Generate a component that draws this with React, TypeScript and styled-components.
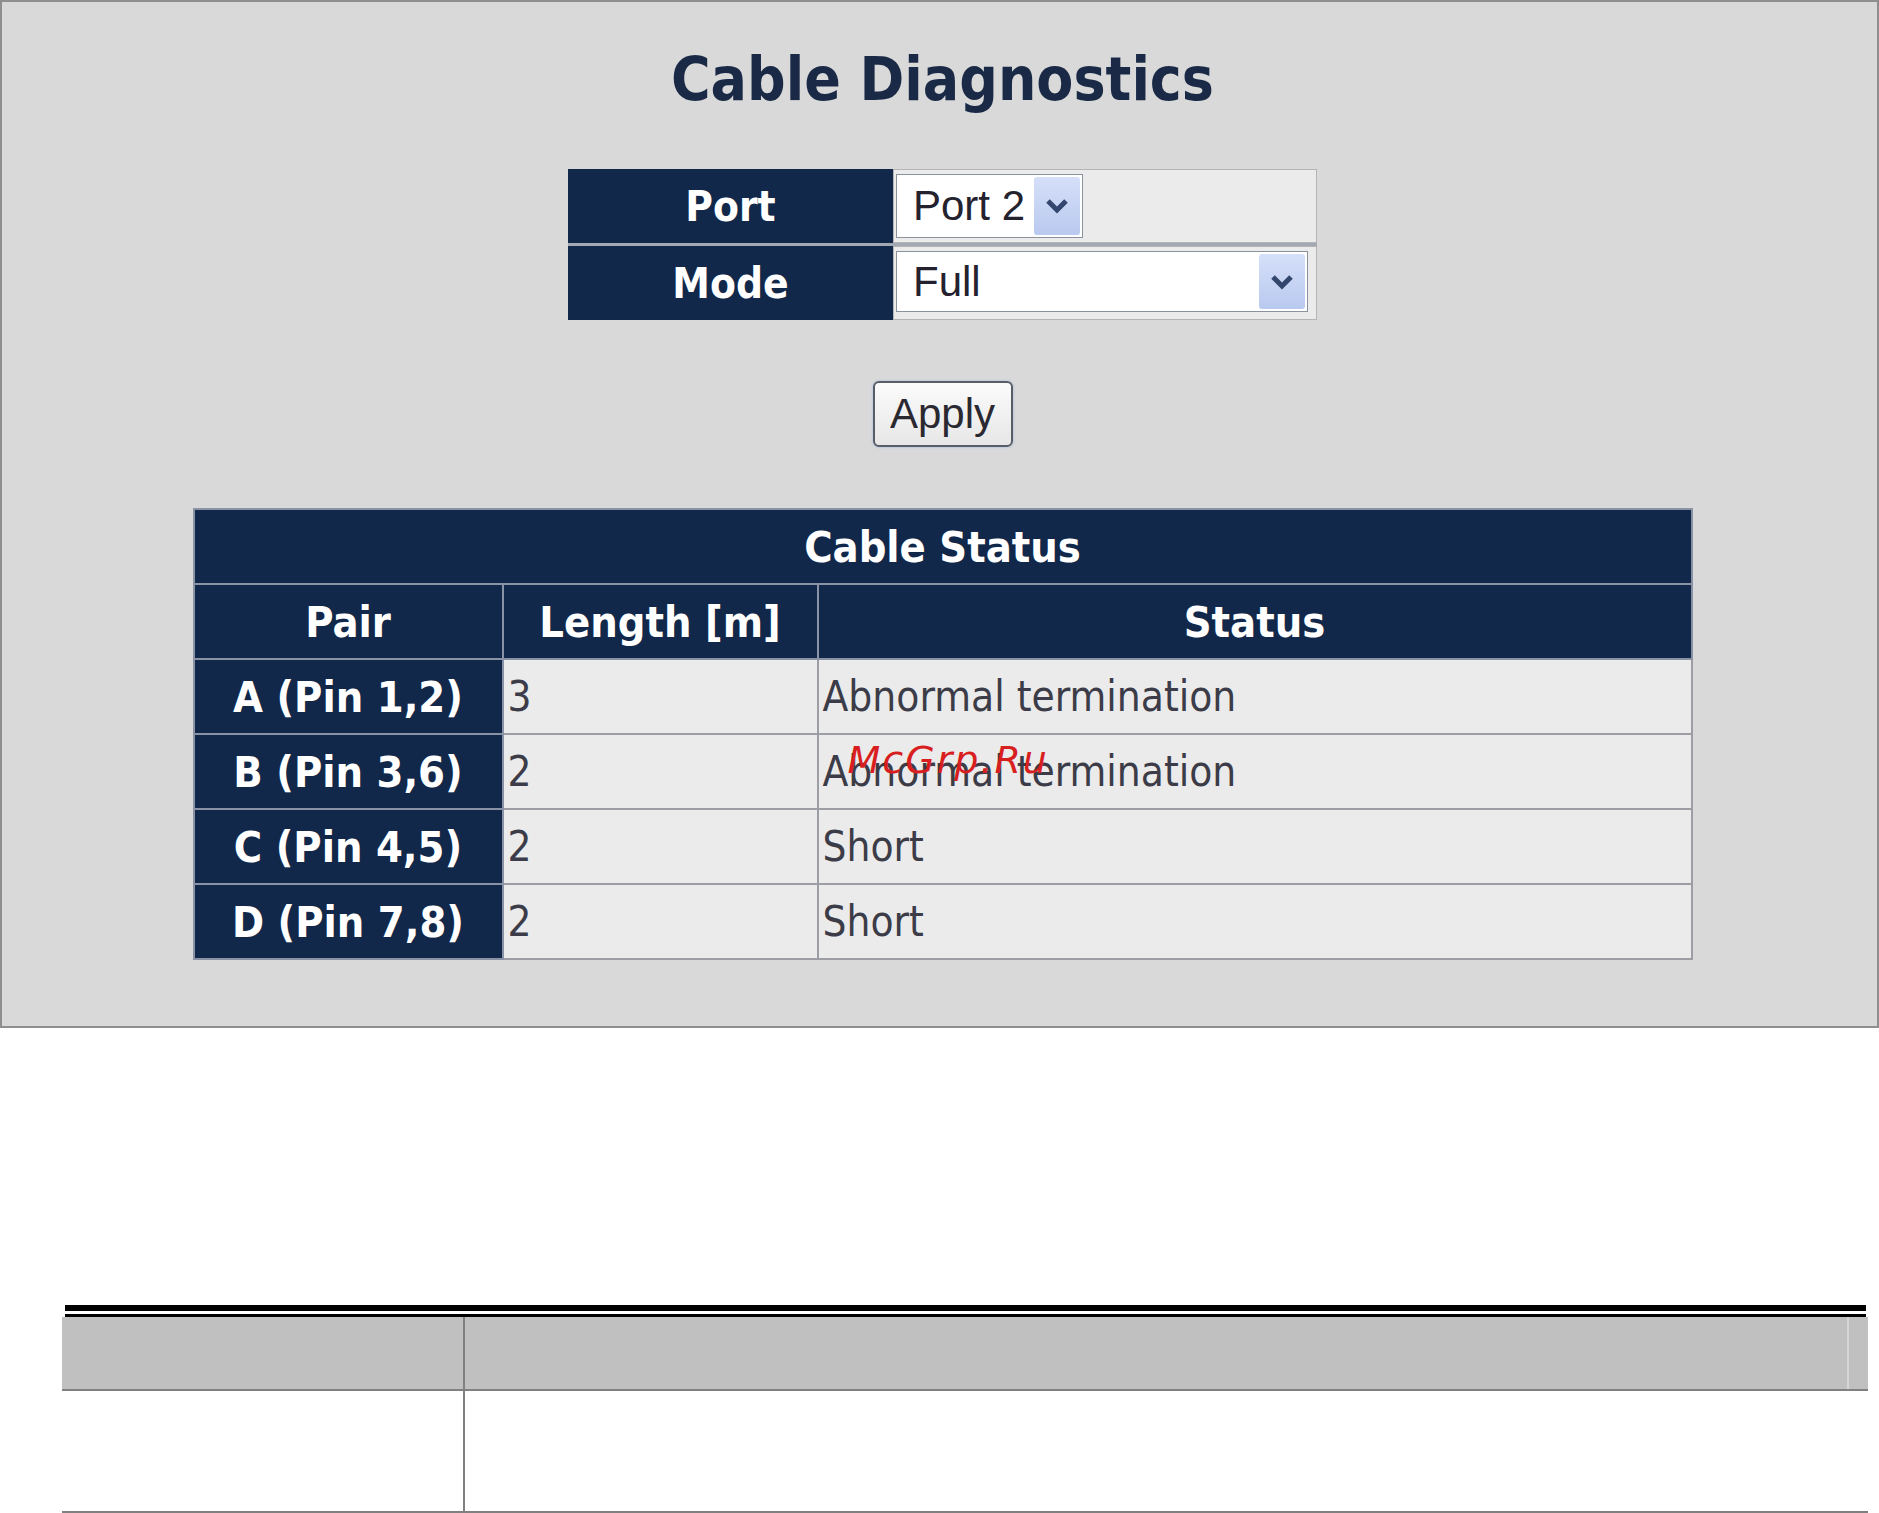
import React from "react";
import styled, { createGlobalStyle } from "styled-components";

const GlobalStyle = createGlobalStyle`
  html, body {
    margin: 0;
    padding: 0;
    background: #ffffff;
  }
  body {
    width: 1879px;
    font-family: "DejaVu Sans", Verdana, sans-serif;
  }
`;

const NAVY = "#12284a";
const condensed = `
  font-family: "DejaVu Sans Condensed", "DejaVu Sans", Verdana, sans-serif;
  font-stretch: condensed;
`;

const pairs = [
  { pair: "A (Pin 1,2)", length: "3", status: "Abnormal termination" },
  { pair: "B (Pin 3,6)", length: "2", status: "Abnormal termination" },
  { pair: "C (Pin 4,5)", length: "2", status: "Short" },
  { pair: "D (Pin 7,8)", length: "2", status: "Short" },
];

const Panel = styled.section`
  box-sizing: border-box;
  width: 1879px;
  height: 1028px;
  border: 2px solid #8e8e8e;
  background: #d9d9d9;
  display: flex;
  flex-direction: column;
  align-items: center;
  padding: 41px 0 0 6px;
`;

const Title = styled.h1`
  margin: 0;
  ${condensed}
  font-weight: bold;
  font-size: 60px;
  line-height: 72px;
  color: #1a2a46;
`;

const SettingsGrid = styled.div`
  margin-top: 54px;
  display: grid;
  grid-template-columns: 325px 424px;
  grid-auto-rows: 74px;
  row-gap: 3px;
  background: #a3a9b3;
`;

const Label = styled.div`
  background: ${NAVY};
  color: #ffffff;
  ${condensed}
  font-weight: bold;
  font-size: 42px;
  display: flex;
  align-items: center;
  justify-content: center;
`;

const ValueCell = styled.div`
  box-sizing: border-box;
  background: #ebebeb;
  border: 1px solid #b4b4b4;
  padding: 4px 2px;
  display: flex;
  align-items: flex-start;
`;

const SelectBox = styled.div<{ $width: number; $height: number }>`
  box-sizing: border-box;
  width: ${(p) => p.$width}px;
  height: ${(p) => p.$height}px;
  background: #ffffff;
  border: 1px solid #8a929e;
  display: flex;
  align-items: center;
  padding: 2px 2px 2px 16px;
  font-family: "Liberation Sans", Arial, sans-serif;
  font-size: 42px;
  color: #24222e;
`;

const SelectText = styled.span`
  flex: 1;
`;

const ArrowButton = styled.div`
  width: 46px;
  align-self: stretch;
  border-radius: 3px;
  background: linear-gradient(#d5dff8, #b9c9ef);
  display: flex;
  align-items: center;
  justify-content: center;
`;

const Chevron = () => (
  <svg width="24" height="16" viewBox="0 0 24 16">
    <path d="M3 3 L12 12 L21 3" fill="none" stroke="#33466e" strokeWidth="5" />
  </svg>
);

const ApplyButton = styled.button`
  margin-top: 61px;
  box-sizing: border-box;
  width: 140px;
  height: 66px;
  border: 2px solid #585d66;
  border-radius: 6px;
  background: linear-gradient(#fbfbfb, #e7e7e7);
  box-shadow: 0 0 2px 1px #bfcbdc;
  font-family: "Liberation Sans", Arial, sans-serif;
  font-size: 42px;
  color: #2a2830;
  padding: 0;
`;

const TableWrap = styled.div`
  position: relative;
  margin-top: 61px;
`;

const StatusTable = styled.table`
  width: 1500px;
  border-collapse: collapse;
  table-layout: fixed;
`;

const HeadCell = styled.th`
  height: 73px;
  padding: 0;
  background: ${NAVY};
  color: #ffffff;
  ${condensed}
  font-weight: bold;
  font-size: 43px;
  text-align: center;
  border: 2px solid #8993a5;
`;

const PairCell = styled(HeadCell)``;

const DataCell = styled.td`
  height: 73px;
  padding: 0 0 0 4px;
  background: #ebebeb;
  color: #3c3c48;
  ${condensed}
  font-size: 42px;
  text-align: left;
  border: 2px solid #9c9ea3;
`;

const Watermark = styled.div`
  position: absolute;
  left: 655px;
  top: 233px;
  font-family: "DejaVu Sans", Verdana, sans-serif;
  font-style: italic;
  font-size: 38px;
  line-height: 38px;
  letter-spacing: 2px;
  color: #d81e1e;
  pointer-events: none;
`;

const SpecTable = styled.div`
  margin: 277px 0 0 62px;
  width: 1806px;
`;

const ThickRule = styled.div`
  margin-left: 3px;
  width: 1801px;
  height: 6px;
  background: #000000;
`;

const ThinRule = styled.div`
  margin: 3px 0 0 3px;
  width: 1801px;
  height: 3px;
  background: #000000;
`;

const SpecRow = styled.div<{ $head?: boolean }>`
  box-sizing: border-box;
  display: grid;
  grid-template-columns: 401px 1fr;
  column-gap: 2px;
  height: ${(p) => (p.$head ? 74 : 122)}px;
  background: #808080;
  border-bottom: 2px solid #808080;
`;

const SpecCell = styled.div<{ $head?: boolean; $edge?: boolean }>`
  background: ${(p) =>
    p.$head
      ? p.$edge
        ? "linear-gradient(to left, #c0c0c0 19px, #d6d6d6 19px, #d6d6d6 21px, #c0c0c0 21px)"
        : "#c0c0c0"
      : "#ffffff"};
`;

export default function App() {
  return (
    <>
      <GlobalStyle />
      <Panel>
        <Title>Cable Diagnostics</Title>
        <SettingsGrid>
          <Label>Port</Label>
          <ValueCell>
            <SelectBox $width={187} $height={64}>
              <SelectText>Port 2</SelectText>
              <ArrowButton>
                <Chevron />
              </ArrowButton>
            </SelectBox>
          </ValueCell>
          <Label>Mode</Label>
          <ValueCell>
            <SelectBox $width={412} $height={61}>
              <SelectText>Full</SelectText>
              <ArrowButton>
                <Chevron />
              </ArrowButton>
            </SelectBox>
          </ValueCell>
        </SettingsGrid>
        <ApplyButton>Apply</ApplyButton>
        <TableWrap>
          <StatusTable>
            <colgroup>
              <col style={{ width: 309 }} />
              <col style={{ width: 315 }} />
              <col />
            </colgroup>
            <thead>
              <tr>
                <HeadCell colSpan={3}>Cable Status</HeadCell>
              </tr>
              <tr>
                <HeadCell>Pair</HeadCell>
                <HeadCell>Length [m]</HeadCell>
                <HeadCell>Status</HeadCell>
              </tr>
            </thead>
            <tbody>
              {pairs.map((row) => (
                <tr key={row.pair}>
                  <PairCell as="td">{row.pair}</PairCell>
                  <DataCell>{row.length}</DataCell>
                  <DataCell>{row.status}</DataCell>
                </tr>
              ))}
            </tbody>
          </StatusTable>
          <Watermark>McGrp.Ru</Watermark>
        </TableWrap>
      </Panel>
      <SpecTable>
        <ThickRule />
        <ThinRule />
        <SpecRow $head>
          <SpecCell $head />
          <SpecCell $head $edge />
        </SpecRow>
        <SpecRow>
          <SpecCell />
          <SpecCell />
        </SpecRow>
      </SpecTable>
    </>
  );
}
